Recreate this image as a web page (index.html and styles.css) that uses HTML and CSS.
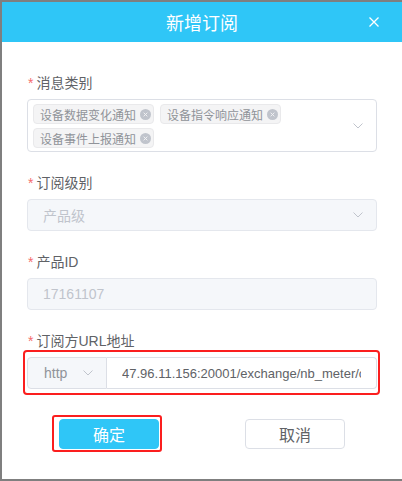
FILE: index.html
```html
<html>
  <head>
    <title>新增订阅</title>
    <link rel="stylesheet" href="styles.css">
  </head>
  <body>
    <div class="dialog">
      <header class="dialog-header">
        <span class="dialog-title">新增订阅</span>
        <button class="dialog-close" type="button">
          <svg viewBox="0 0 10 10"><path d="M0.5 0.5 9.5 9.5M9.5 0.5 0.5 9.5" /></svg>
        </button>
      </header>
      <form class="dialog-body">
        <div class="form-item">
          <label class="form-label"><span class="required">*</span>消息类别</label>
          <div class="select multi">
            <div class="tags">
              <span class="tag">设备数据变化通知<svg class="tag-close" viewBox="0 0 12 12"><circle cx="6" cy="6" r="6" /><path d="M4 4 8 8M8 4 4 8" /></svg></span>
              <span class="tag">设备指令响应通知<svg class="tag-close" viewBox="0 0 12 12"><circle cx="6" cy="6" r="6" /><path d="M4 4 8 8M8 4 4 8" /></svg></span>
              <span class="tag">设备事件上报通知<svg class="tag-close" viewBox="0 0 12 12"><circle cx="6" cy="6" r="6" /><path d="M4 4 8 8M8 4 4 8" /></svg></span>
            </div>
            <svg class="arrow" viewBox="0 0 10 6"><path d="M0.5 0.5 5 5 9.5 0.5" /></svg>
          </div>
        </div>
        <div class="form-item">
          <label class="form-label"><span class="required">*</span>订阅级别</label>
          <div class="select disabled">
            <span>产品级</span>
            <svg class="arrow" viewBox="0 0 10 6"><path d="M0.5 0.5 5 5 9.5 0.5" /></svg>
          </div>
        </div>
        <div class="form-item">
          <label class="form-label"><span class="required">*</span>产品ID</label>
          <div class="input disabled">17161107</div>
        </div>
        <div class="form-item last">
          <label class="form-label"><span class="required">*</span>订阅方URL地址</label>
          <div class="input-group marked">
            <div class="prepend">
              <span>http</span>
              <svg class="arrow" viewBox="0 0 10 6"><path d="M0.5 0.5 5 5 9.5 0.5" /></svg>
            </div>
            <input class="url" type="text" value="47.96.11.156:20001/exchange/nb_meter/callback" />
          </div>
        </div>
        <div class="dialog-footer">
          <button class="btn primary marked-btn" type="button">确定</button>
          <button class="btn" type="button">取消</button>
        </div>
      </form>
    </div>
  </body>
</html>
```

FILE: styles.css
```css
body {
  margin: 0;
  padding: 2px 0 0 2px;
  background-color: #7f7f7f;
  font-family: "Liberation Sans", "Noto Sans CJK SC", sans-serif;
  font-size: 14px;
}
.dialog {
  width: 400px;
  height: 477px;
  background-color: #fff;
}
.dialog-header {
  height: 40px;
  background-color: #2fc6f7;
  display: grid;
  grid-template-columns: 1fr auto 1fr;
  align-items: center;
}
.dialog-title {
  grid-column: 2;
  color: #fff;
  font-size: 18px;
}
.dialog-close {
  grid-column: 3;
  justify-self: end;
  margin-right: 23px;
  padding: 0;
  border: none;
  background: none;
  width: 10px;
  height: 10px;
  display: flex;
}
.dialog-close svg {
  width: 10px;
  height: 10px;
  stroke: #fff;
  stroke-width: 1.3;
}
.dialog-body {
  margin: 0;
  padding: 31px 25px 0 25px;
}
.form-item {
  margin-bottom: 21px;
}
.form-item.last {
  margin-bottom: 0;
}
.form-label {
  display: block;
  line-height: 20px;
  margin-bottom: 6px;
  color: #606266;
}
.required {
  color: #f56c6c;
  margin: 0 3px 0 1px;
}
.arrow {
  width: 10px;
  height: 6px;
  fill: none;
  stroke: #c0c4cc;
  stroke-width: 1;
  flex-shrink: 0;
}
.select {
  box-sizing: border-box;
  height: 32px;
  border: 1px solid #dcdfe6;
  border-radius: 4px;
  display: flex;
  align-items: center;
  justify-content: space-between;
  padding: 0 13px 0 15px;
}
.select.multi {
  height: 53px;
  padding: 4px 13px 3px 5px;
}
.select.disabled,
.input.disabled {
  background-color: #f5f7fa;
  border-color: #e4e7ed;
  color: #c0c4cc;
}
.tags {
  display: flex;
  flex-wrap: wrap;
  gap: 4px 6px;
  width: 300px;
}
.tag {
  box-sizing: border-box;
  height: 20px;
  display: inline-flex;
  align-items: center;
  gap: 4px;
  padding: 0 2px 0 6px;
  background-color: #f4f4f5;
  border: 1px solid #e9e9eb;
  border-radius: 4px;
  color: #909399;
  font-size: 12px;
}
.tag-close {
  width: 11px;
  height: 11px;
}
.tag-close circle {
  fill: #c0c4cc;
}
.tag-close path {
  stroke: #f4f4f5;
  stroke-width: 1;
}
.input {
  box-sizing: border-box;
  height: 32px;
  border: 1px solid #dcdfe6;
  border-radius: 4px;
  display: flex;
  align-items: center;
  padding: 0 15px;
}
.input-group {
  display: flex;
  height: 32px;
}
.marked,
.marked-btn {
  position: relative;
}
.marked::after {
  content: "";
  position: absolute;
  top: -7px;
  left: -4px;
  right: -3px;
  bottom: -6px;
  border: 2px solid #fb1e1e;
  border-radius: 4px;
}
.marked-btn::after {
  content: "";
  position: absolute;
  top: -5px;
  left: -8px;
  right: -4px;
  bottom: -4px;
  border: 2px solid #fb1e1e;
  border-radius: 3px;
}
.prepend {
  box-sizing: border-box;
  width: 80px;
  display: flex;
  align-items: center;
  justify-content: space-between;
  padding: 0 13px 0 16px;
  background-color: #f5f7fa;
  border: 1px solid #dcdfe6;
  border-radius: 4px 0 0 4px;
  color: #909399;
}
.url {
  flex: 1;
  min-width: 0;
  box-sizing: border-box;
  height: 32px;
  margin: 0;
  padding: 0 15px;
  border: 1px solid #dcdfe6;
  border-left: none;
  border-radius: 0 4px 4px 0;
  font-family: inherit;
  font-size: 13px;
  color: #606266;
  outline: none;
}
.dialog-footer {
  display: flex;
  justify-content: space-between;
  padding: 30px 32px 0 32px;
}
.btn {
  box-sizing: border-box;
  width: 100px;
  height: 30px;
  border: 1px solid #dcdfe6;
  border-radius: 4px;
  background-color: #fff;
  color: #606266;
  font-family: inherit;
  font-size: 16px;
  padding: 0;
}
.btn.primary {
  background-color: #2fc6f7;
  border-color: #2fc6f7;
  color: #fff;
}
```
